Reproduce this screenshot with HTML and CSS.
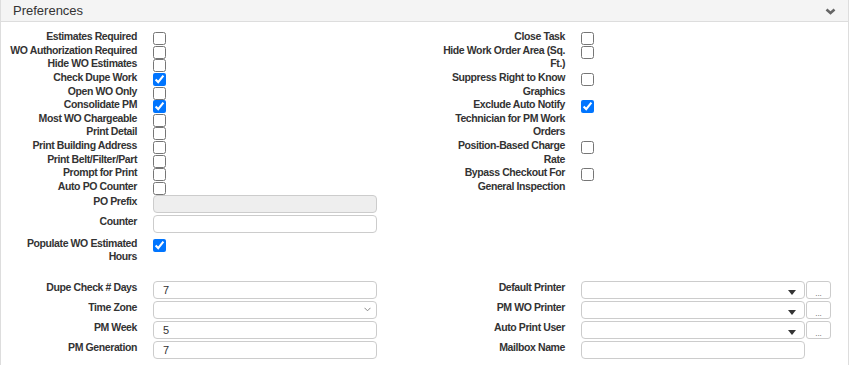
FILE: index.html
```html
<!DOCTYPE html>
<html lang="en">
<head>
    <meta charset="UTF-8">
    <meta name="viewport" content="width=device-width, initial-scale=1.0">
    <title>Preferences</title>
    <link rel="stylesheet" href="styles.css">
</head>
<body>
    <div class="panel">
        <div class="panel-heading">
            <span class="panel-title">Preferences</span>
            <svg class="chevron" width="11" height="7" viewBox="0 0 11 7">
                <path d="M1.5 1.5 L5.5 5 L9.5 1.5" fill="none" stroke="#666" stroke-width="2.6"/>
            </svg>
        </div>
        <div class="panel-body">
            <div class="columns">
                <div class="col">
                    <div class="field"><label class="field-label">Estimates Required</label><input type="checkbox" class="check"></div>
                    <div class="field"><label class="field-label">WO Authorization Required</label><input type="checkbox" class="check"></div>
                    <div class="field"><label class="field-label">Hide WO Estimates</label><input type="checkbox" class="check"></div>
                    <div class="field"><label class="field-label">Check Dupe Work</label><input type="checkbox" class="check" checked></div>
                    <div class="field"><label class="field-label">Open WO Only</label><input type="checkbox" class="check"></div>
                    <div class="field"><label class="field-label">Consolidate PM</label><input type="checkbox" class="check" checked></div>
                    <div class="field"><label class="field-label">Most WO Chargeable</label><input type="checkbox" class="check"></div>
                    <div class="field"><label class="field-label">Print Detail</label><input type="checkbox" class="check"></div>
                    <div class="field"><label class="field-label">Print Building Address</label><input type="checkbox" class="check"></div>
                    <div class="field"><label class="field-label">Print Belt/Filter/Part</label><input type="checkbox" class="check"></div>
                    <div class="field"><label class="field-label">Prompt for Print</label><input type="checkbox" class="check"></div>
                    <div class="field"><label class="field-label">Auto PO Counter</label><input type="checkbox" class="check"></div>
                    <div class="field field-input first-input"><label class="field-label">PO Prefix</label><input type="text" class="text-input" disabled></div>
                    <div class="field field-input"><label class="field-label">Counter</label><input type="text" class="text-input"></div>
                    <div class="field populate"><label class="field-label">Populate WO Estimated Hours</label><input type="checkbox" class="check" checked></div>
                </div>
                <div class="col">
                    <div class="field"><label class="field-label">Close Task</label><input type="checkbox" class="check"></div>
                    <div class="field"><label class="field-label">Hide Work Order Area (Sq. Ft.)</label><input type="checkbox" class="check"></div>
                    <div class="field"><label class="field-label">Suppress Right to Know Graphics</label><input type="checkbox" class="check"></div>
                    <div class="field"><label class="field-label">Exclude Auto Notify Technician for PM Work Orders</label><input type="checkbox" class="check" checked></div>
                    <div class="field"><label class="field-label">Position-Based Charge Rate</label><input type="checkbox" class="check"></div>
                    <div class="field"><label class="field-label">Bypass Checkout For General Inspection</label><input type="checkbox" class="check"></div>
                </div>
            </div>

            <div class="columns columns-bottom">
                <div class="col">
                    <div class="field field-input"><label class="field-label">Dupe Check # Days</label><input type="text" class="text-input" value="7"></div>
                    <div class="field field-input">
                        <label class="field-label">Time Zone</label>
                        <div class="select">
                            <svg width="7" height="5" viewBox="0 0 7 5"><path d="M0.5 0.8 L3.5 3.8 L6.5 0.8" fill="none" stroke="#888" stroke-width="1"/></svg>
                        </div>
                    </div>
                    <div class="field field-input"><label class="field-label">PM Week</label><input type="text" class="text-input" value="5"></div>
                    <div class="field field-input"><label class="field-label">PM Generation</label><input type="text" class="text-input" value="7"></div>
                </div>
                <div class="col">
                    <div class="field field-input">
                        <label class="field-label">Default Printer</label>
                        <div class="combo">
                            <div class="combo-box"><svg width="8" height="5" viewBox="0 0 8 5"><path d="M0 0 H8 L4 5 Z" fill="#333"/></svg></div>
                            <div class="combo-btn">...</div>
                        </div>
                    </div>
                    <div class="field field-input">
                        <label class="field-label">PM WO Printer</label>
                        <div class="combo">
                            <div class="combo-box"><svg width="8" height="5" viewBox="0 0 8 5"><path d="M0 0 H8 L4 5 Z" fill="#333"/></svg></div>
                            <div class="combo-btn">...</div>
                        </div>
                    </div>
                    <div class="field field-input">
                        <label class="field-label">Auto Print User</label>
                        <div class="combo">
                            <div class="combo-box"><svg width="8" height="5" viewBox="0 0 8 5"><path d="M0 0 H8 L4 5 Z" fill="#333"/></svg></div>
                            <div class="combo-btn">...</div>
                        </div>
                    </div>
                    <div class="field field-input"><label class="field-label">Mailbox Name</label><input type="text" class="text-input"></div>
                </div>
            </div>
        </div>
    </div>
</body>
</html>
```

FILE: styles.css
```css
body {
    margin: 0;
    font-family: "Liberation Sans", Arial, sans-serif;
    color: #333;
    background: #fff;
}
.panel {
    width: 849px;
    min-height: 380px;
    box-sizing: border-box;
    border-left: 1px solid #ddd;
    border-right: 1px solid #ddd;
}
.panel-heading {
    height: 21px;
    background: #f4f4f4;
    border-bottom: 1px solid #ddd;
    display: flex;
    align-items: center;
    justify-content: space-between;
    padding: 0 12px;
}
.panel-title {
    font-size: 13px;
}
.chevron {
    margin-top: 1px;
}
.panel-body {
    padding-top: 8px;
}
.columns {
    display: grid;
    grid-template-columns: 428px 1fr;
}
.col {
    padding-left: 8px;
}
.columns-bottom {
    margin-top: 17px;
}
.field {
    display: flex;
    align-items: flex-start;
}
.field-label {
    flex: none;
    width: 128px;
    margin-right: 16px;
    text-align: right;
    font-weight: bold;
    font-size: 10.5px;
    letter-spacing: -0.4px;
    line-height: 13.64px;
}
.check {
    margin: 2px 0 -2px 0;
    width: 13px;
    height: 13px;
}
.field-input {
    height: 20px;
}
.first-input {
    margin-top: 1px;
}
.populate {
    margin-top: 2px;
}
.text-input,
.select,
.combo-box {
    width: 224px;
    height: 18px;
    margin: 0;
    padding: 0 9px;
    box-sizing: border-box;
    border: 1px solid #ccc;
    border-radius: 4px;
    font-family: "Liberation Sans", Arial, sans-serif;
    font-size: 11px;
    color: #333;
    background: #fff;
}
.text-input:disabled {
    background: #eee;
}
.select {
    display: flex;
    align-items: center;
    justify-content: flex-end;
    padding-right: 5px;
}
.combo {
    display: flex;
    gap: 1px;
}
.combo-box {
    display: flex;
    align-items: flex-end;
    justify-content: flex-end;
    padding: 0 8px 3px 0;
}
.combo-btn {
    width: 25px;
    height: 18px;
    box-sizing: border-box;
    border: 1px solid #ccc;
    border-radius: 3px;
    font-size: 8px;
    color: #555;
    text-align: center;
    line-height: 24px;
    overflow: hidden;
}
```
